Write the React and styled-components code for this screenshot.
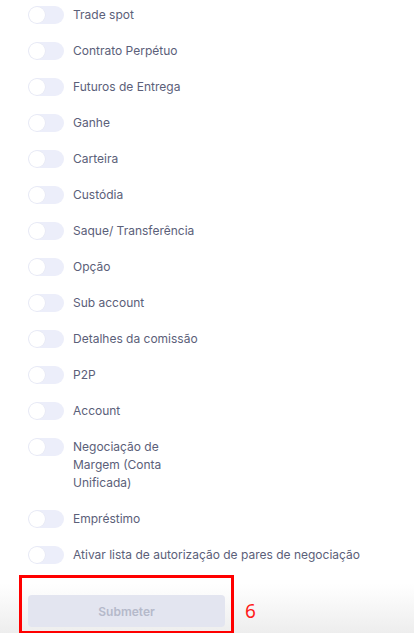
import React from "react";
import styled, { createGlobalStyle } from "styled-components";

const GlobalStyle = createGlobalStyle`
  body {
    margin: 0;
    background: #fff;
    font-family: Inter, "Noto Sans", sans-serif;
  }
`;

const items = [
  { label: "Trade spot" },
  { label: "Contrato Perpétuo" },
  { label: "Futuros de Entrega" },
  { label: "Ganhe" },
  { label: "Carteira" },
  { label: "Custódia" },
  { label: "Saque/ Transferência" },
  { label: "Opção" },
  { label: "Sub account" },
  { label: "Detalhes da comissão" },
  { label: "P2P" },
  { label: "Account" },
  { label: "Negociação de Margem (Conta Unificada)", narrow: true },
  { label: "Empréstimo" },
  { label: "Ativar lista de autorização de pares de negociação" },
];

const App = () => {
  return (
    <>
      <GlobalStyle />
      <StPage>
        <StList>
          {items.map((item) => (
            <StRow key={item.label}>
              <StToggle type="button" aria-label={item.label}>
                <StKnob />
              </StToggle>
              <StLabel $narrow={item.narrow}>{item.label}</StLabel>
            </StRow>
          ))}
        </StList>
        <StFooter>
          <StMarkBox>
            <StSubmit type="button" disabled>
              Submeter
            </StSubmit>
          </StMarkBox>
          <StMarkNum>6</StMarkNum>
        </StFooter>
      </StPage>
    </>
  );
};

export default App;

const StPage = styled.div`
  width: 414px;
  height: 633px;
  overflow: hidden;
  display: flex;
  flex-direction: column;
`;

const StList = styled.ul`
  list-style: none;
  margin: 0;
  padding: 6px 0 0 28px;
  display: flex;
  flex-direction: column;
  gap: 18px;
`;

const StRow = styled.li`
  display: flex;
  align-items: flex-start;
  gap: 9px;
`;

const StToggle = styled.button`
  flex: none;
  width: 36px;
  height: 18px;
  padding: 1px;
  border: none;
  border-radius: 9px;
  background: #eceefa;
  display: flex;
  align-items: center;
  cursor: pointer;
`;

const StKnob = styled.span`
  width: 16px;
  height: 16px;
  border-radius: 50%;
  background: #fff;
  box-shadow: 0 0 0 0.5px #e3e5f0;
`;

const StLabel = styled.span`
  font-size: 12px;
  line-height: 18px;
  color: #5b6079;
  max-width: ${(p) => (p.$narrow ? "95px" : "none")};
`;

const StFooter = styled.div`
  margin-top: 11px;
  flex: 1;
  display: flex;
  align-items: flex-start;
  gap: 11px;
  padding-left: 19px;
  background: linear-gradient(to bottom, #ffffff 15%, #ededed 100%);
`;

const StMarkBox = styled.div`
  border: 3px solid #ff0000;
  padding: 17px 6px 4px;
  height: 100%;
  box-sizing: border-box;
`;

const StSubmit = styled.button`
  width: 197px;
  height: 32px;
  border: none;
  border-radius: 4px;
  background: #e3e5f0;
  color: #b5b9ca;
  font-family: Inter, "Noto Sans", sans-serif;
  font-size: 12px;
  font-weight: 600;
  display: block;
`;

const StMarkNum = styled.span`
  margin-top: 24px;
  color: #ff1a1a;
  font-family: "Noto Sans", sans-serif;
  font-size: 19px;
  line-height: 24px;
`;
